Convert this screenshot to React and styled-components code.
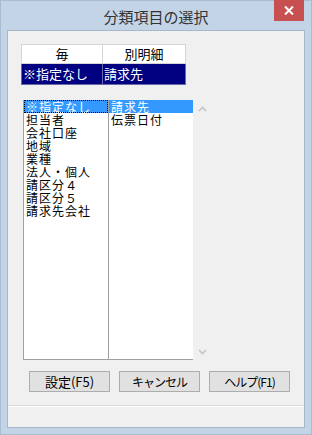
import React from 'react';
import styled, { createGlobalStyle } from 'styled-components';

const GlobalStyle = createGlobalStyle`
  html, body {
    margin: 0;
    padding: 0;
    background: #c3d4e7;
  }
  body {
    font-family: "Noto Sans CJK JP", "Liberation Sans", sans-serif;
  }
`;

const Window = styled.div`
  width: 312px;
  height: 435px;
  box-sizing: border-box;
  background: #c3d4e7;
  border: 1px solid #a9bcd2;
  padding: 0 6px 6px;
  display: flex;
  flex-direction: column;
`;

const TitleBar = styled.div`
  height: 29px;
  position: relative;
  display: flex;
  align-items: center;
  justify-content: center;
`;

const Title = styled.span`
  font-size: 15px;
  color: #333;
  margin-top: 2px;
`;

const CloseButton = styled.div`
  position: absolute;
  top: -1px;
  right: 1px;
  width: 30px;
  height: 21px;
  background: #c75050;
  display: flex;
  align-items: center;
  justify-content: center;
`;

const Client = styled.div`
  flex: 1;
  background: #f0f0f0;
  border: 1px solid #a7b8cc;
  display: flex;
  flex-direction: column;
  padding: 13px 0 0 13px;
`;

const HeaderTable = styled.div`
  display: grid;
  grid-template-columns: 82px 83px;
  width: 165px;
`;

const HeadCell = styled.div`
  height: 20px;
  box-sizing: border-box;
  background: #fff;
  border: 1px solid #d5d5d5;
  border-left-width: ${p => (p.$first ? '1px' : '0')};
  font-size: 13px;
  line-height: 18px;
  text-align: center;
  color: #000;
`;

const PickCell = styled.div`
  height: 21px;
  box-sizing: border-box;
  background: #000080;
  border: 1px solid #6a6aa8;
  border-top: 0;
  border-left-width: ${p => (p.$first ? '1px' : '0')};
  font-size: 13px;
  line-height: 20px;
  padding-left: 1px;
  color: #fff;
`;

const ListRow = styled.div`
  display: flex;
  margin: 15px 0 0 2px;
`;

const ListBox = styled.div`
  display: flex;
  height: 260px;
  box-sizing: border-box;
  background: #fff;
  border-left: 1px solid #a0a0a0;
  border-bottom: 1px solid #a0a0a0;
`;

const Column = styled.div`
  width: ${p => p.$w}px;
  border-right: ${p => (p.$divider ? '1px solid #a0a0a0' : '0')};
`;

const Item = styled.div`
  height: 13px;
  box-sizing: border-box;
  font-size: 12px;
  letter-spacing: 1px;
  line-height: 13px;
  padding-left: 2px;
  white-space: nowrap;
  color: ${p => (p.$sel ? '#fff' : '#000')};
  background: ${p => (p.$sel ? '#3399ff' : 'transparent')};
  outline: ${p => (p.$focus ? '1px dotted #000' : 'none')};
  outline-offset: -1px;
`;

const ScrollTrack = styled.div`
  width: 18px;
  display: flex;
  flex-direction: column;
  justify-content: space-between;
  align-items: center;
  padding: 6px 0 5px;
`;

const ButtonRow = styled.div`
  display: flex;
  gap: 9px;
  margin: 11px 0 0 8px;
`;

const Button = styled.div`
  width: 81px;
  height: 21px;
  box-sizing: border-box;
  background: #e1e1e1;
  border: 1px solid #adadad;
  font-size: ${p => (p.$kana ? '12px' : '13px')};
  letter-spacing: ${p => (p.$kana ? '-1px' : '0')};
  line-height: 19px;
  text-align: center;
  color: #000;
`;

const Separator = styled.div`
  margin: 13px 0 0 -13px;
  border-top: 1px solid #d9d9d9;
  border-bottom: 1px solid #fff;
`;

const Chevron = ({ up }) => (
  <svg width="9" height="6" viewBox="0 0 9 6">
    <path
      d={up ? 'M1 5 L4.5 1.5 L8 5' : 'M1 1 L4.5 4.5 L8 1'}
      fill="none"
      stroke="#c4c4c4"
      strokeWidth="1.6"
    />
  </svg>
);

const leftItems = ['※指定なし', '担当者', '会社口座', '地域', '業種', '法人・個人', '請区分４', '請区分５', '請求先会社'];
const rightItems = ['請求先', '伝票日付'];

export default function App() {
  return (
    <>
      <GlobalStyle />
      <Window>
        <TitleBar>
          <Title>分類項目の選択</Title>
          <CloseButton>
            <svg width="10" height="9" viewBox="0 0 10 9">
              <path d="M1 0.5 L9 8.5 M9 0.5 L1 8.5" stroke="#fff" strokeWidth="2" />
            </svg>
          </CloseButton>
        </TitleBar>
        <Client>
          <HeaderTable>
            <HeadCell $first>毎</HeadCell>
            <HeadCell>別明細</HeadCell>
            <PickCell $first>※指定なし</PickCell>
            <PickCell>請求先</PickCell>
          </HeaderTable>
          <ListRow>
            <ListBox>
              <Column $w={84} $divider>
                {leftItems.map((t, i) => (
                  <Item key={t} $sel={i === 0} $focus={i === 0}>{t}</Item>
                ))}
              </Column>
              <Column $w={84}>
                {rightItems.map((t, i) => (
                  <Item key={t} $sel={i === 0}>{t}</Item>
                ))}
              </Column>
            </ListBox>
            <ScrollTrack>
              <Chevron up />
              <Chevron />
            </ScrollTrack>
          </ListRow>
          <ButtonRow>
            <Button>設定(F5)</Button>
            <Button $kana>キャンセル</Button>
            <Button $kana>ヘルプ(F1)</Button>
          </ButtonRow>
          <Separator />
        </Client>
      </Window>
    </>
  );
}
